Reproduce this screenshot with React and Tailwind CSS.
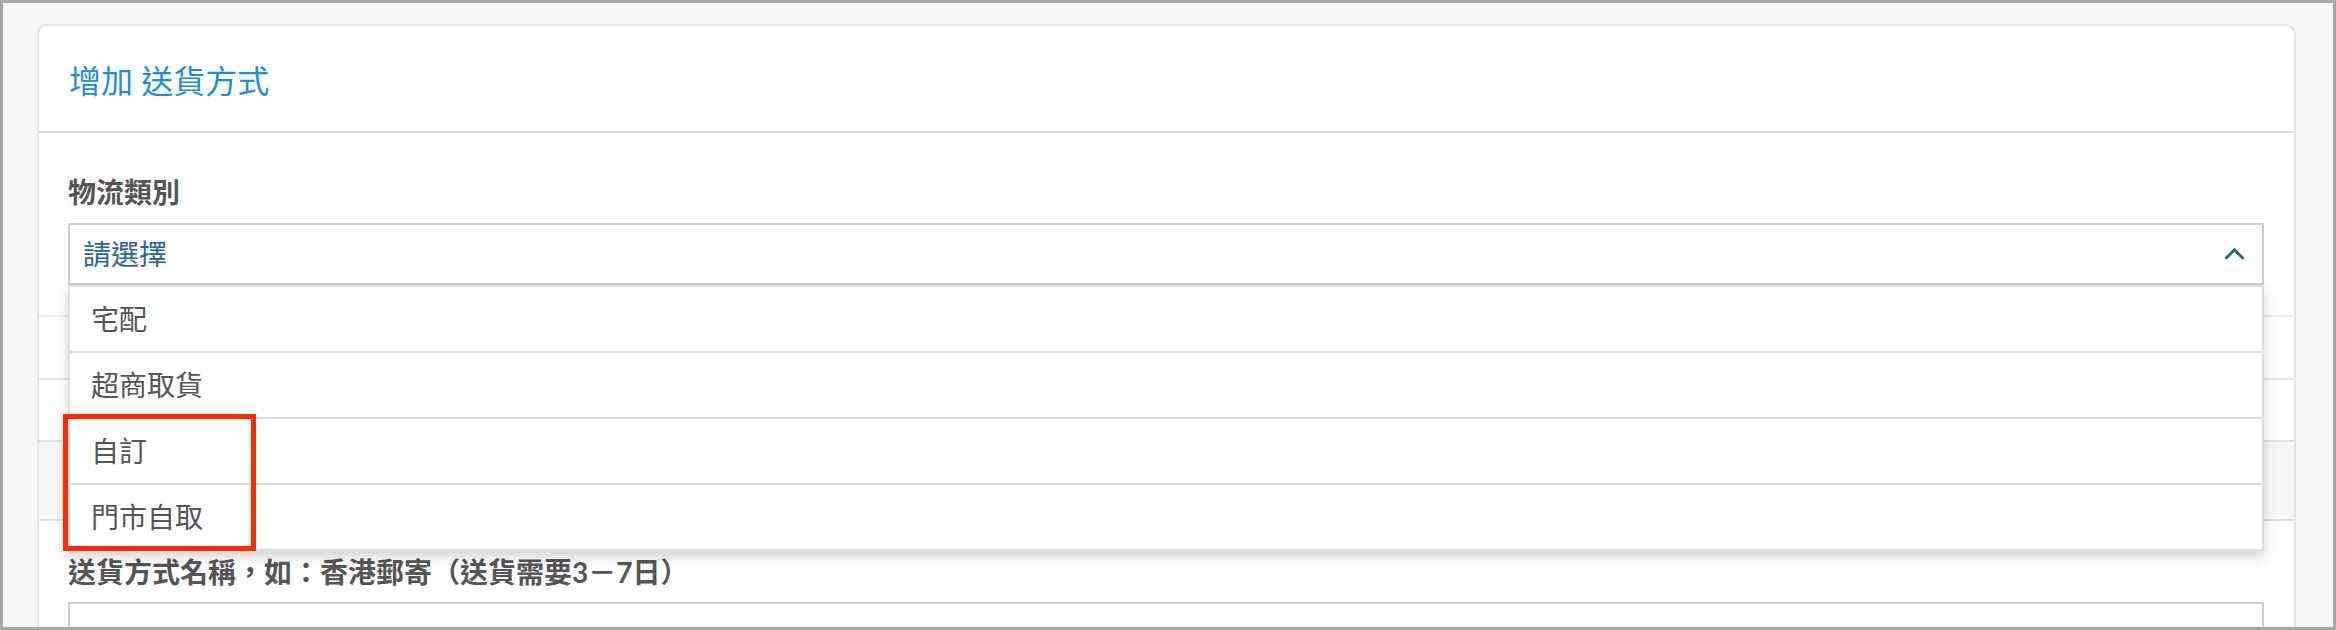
import React from "react";

const items = ["宅配", "超商取貨", "自訂", "門市自取"];

export default function App() {
  return (
    <div className="w-[2336px] h-[630px] overflow-hidden border-[3px] border-[#a6a6a6] bg-[#f7f7f7] font-['Lato','Noto_Sans_CJK_TC',sans-serif]">
      <div className="pt-[21px] pl-[34px] pr-[37px]">
        <div className="relative rounded-[10px] border-2 border-[#e4e4e4] bg-white pb-[40px]">
          {/* header */}
          <div className="h-[107px] border-b-2 border-[#dddddd] flex items-center px-[30px] pt-[4px]">
            <h2 className="text-[32px] leading-[40px] text-[#1c8dd9]">增加 送貨方式</h2>
          </div>

          {/* body */}
          <div className="pt-[39px]">
            <div className="pl-[29px] pr-[30px]">
              <label className="block text-[28px] leading-[40px] font-bold text-[#555555] mb-[11px]">物流類別</label>
              <div className="relative">
                <div className="h-[62px] border-2 border-[#cccccc] bg-white flex items-center justify-between pl-[13px] pr-[17px]">
                  <span className="text-[28px] leading-[40px] text-[#2b6497]">請選擇</span>
                  <svg width="21" height="12" viewBox="0 0 21 12" fill="none">
                    <path d="M1.5 10.8 L10.5 1.8 L19.5 10.8" stroke="#2b6497" strokeWidth="3" />
                  </svg>
                </div>
                {/* dropdown menu */}
                <div className="absolute left-0 right-0 top-full z-10 border-2 border-[#dddddd] bg-white shadow-[0_6px_12px_rgba(0,0,0,0.175)]">
                  {items.map((t, i) => (
                    <div
                      key={t}
                      className={
                        i < items.length - 1
                          ? "h-[66px] border-b-2 border-[#dddddd] flex items-center pl-[21px] text-[28px] text-[#555555]"
                          : "h-[64px] flex items-center pl-[21px] text-[28px] text-[#555555]"
                      }
                    >
                      {t}
                    </div>
                  ))}
                  {/* red annotation box */}
                  <div className="absolute left-[-7px] top-[127px] w-[193px] h-[137px] border-[5px] border-[#ff2a00]"></div>
                </div>
              </div>
            </div>

            {/* hidden rows behind dropdown */}
            <div className="h-[32px] border-b-2 border-[#ececec]"></div>
            <div className="h-[63px] border-b-2 border-[#e6e6e6]"></div>
            <div className="h-[62px] border-b-2 border-[#e0e0e0]"></div>
            <div className="h-[79px] border-b-2 border-[#e0e0e0] bg-[#f6f6f6]"></div>

            <div className="pl-[29px] pr-[30px] pt-[31px]">
              <label className="block text-[28px] leading-[40px] font-bold text-[#555555] mb-[10px]">送貨方式名稱，如：香港郵寄（送貨需要3－7日）</label>
              <div className="h-[62px] border-2 border-[#cccccc] bg-white"></div>
            </div>
          </div>
        </div>
      </div>
    </div>
  );
}
